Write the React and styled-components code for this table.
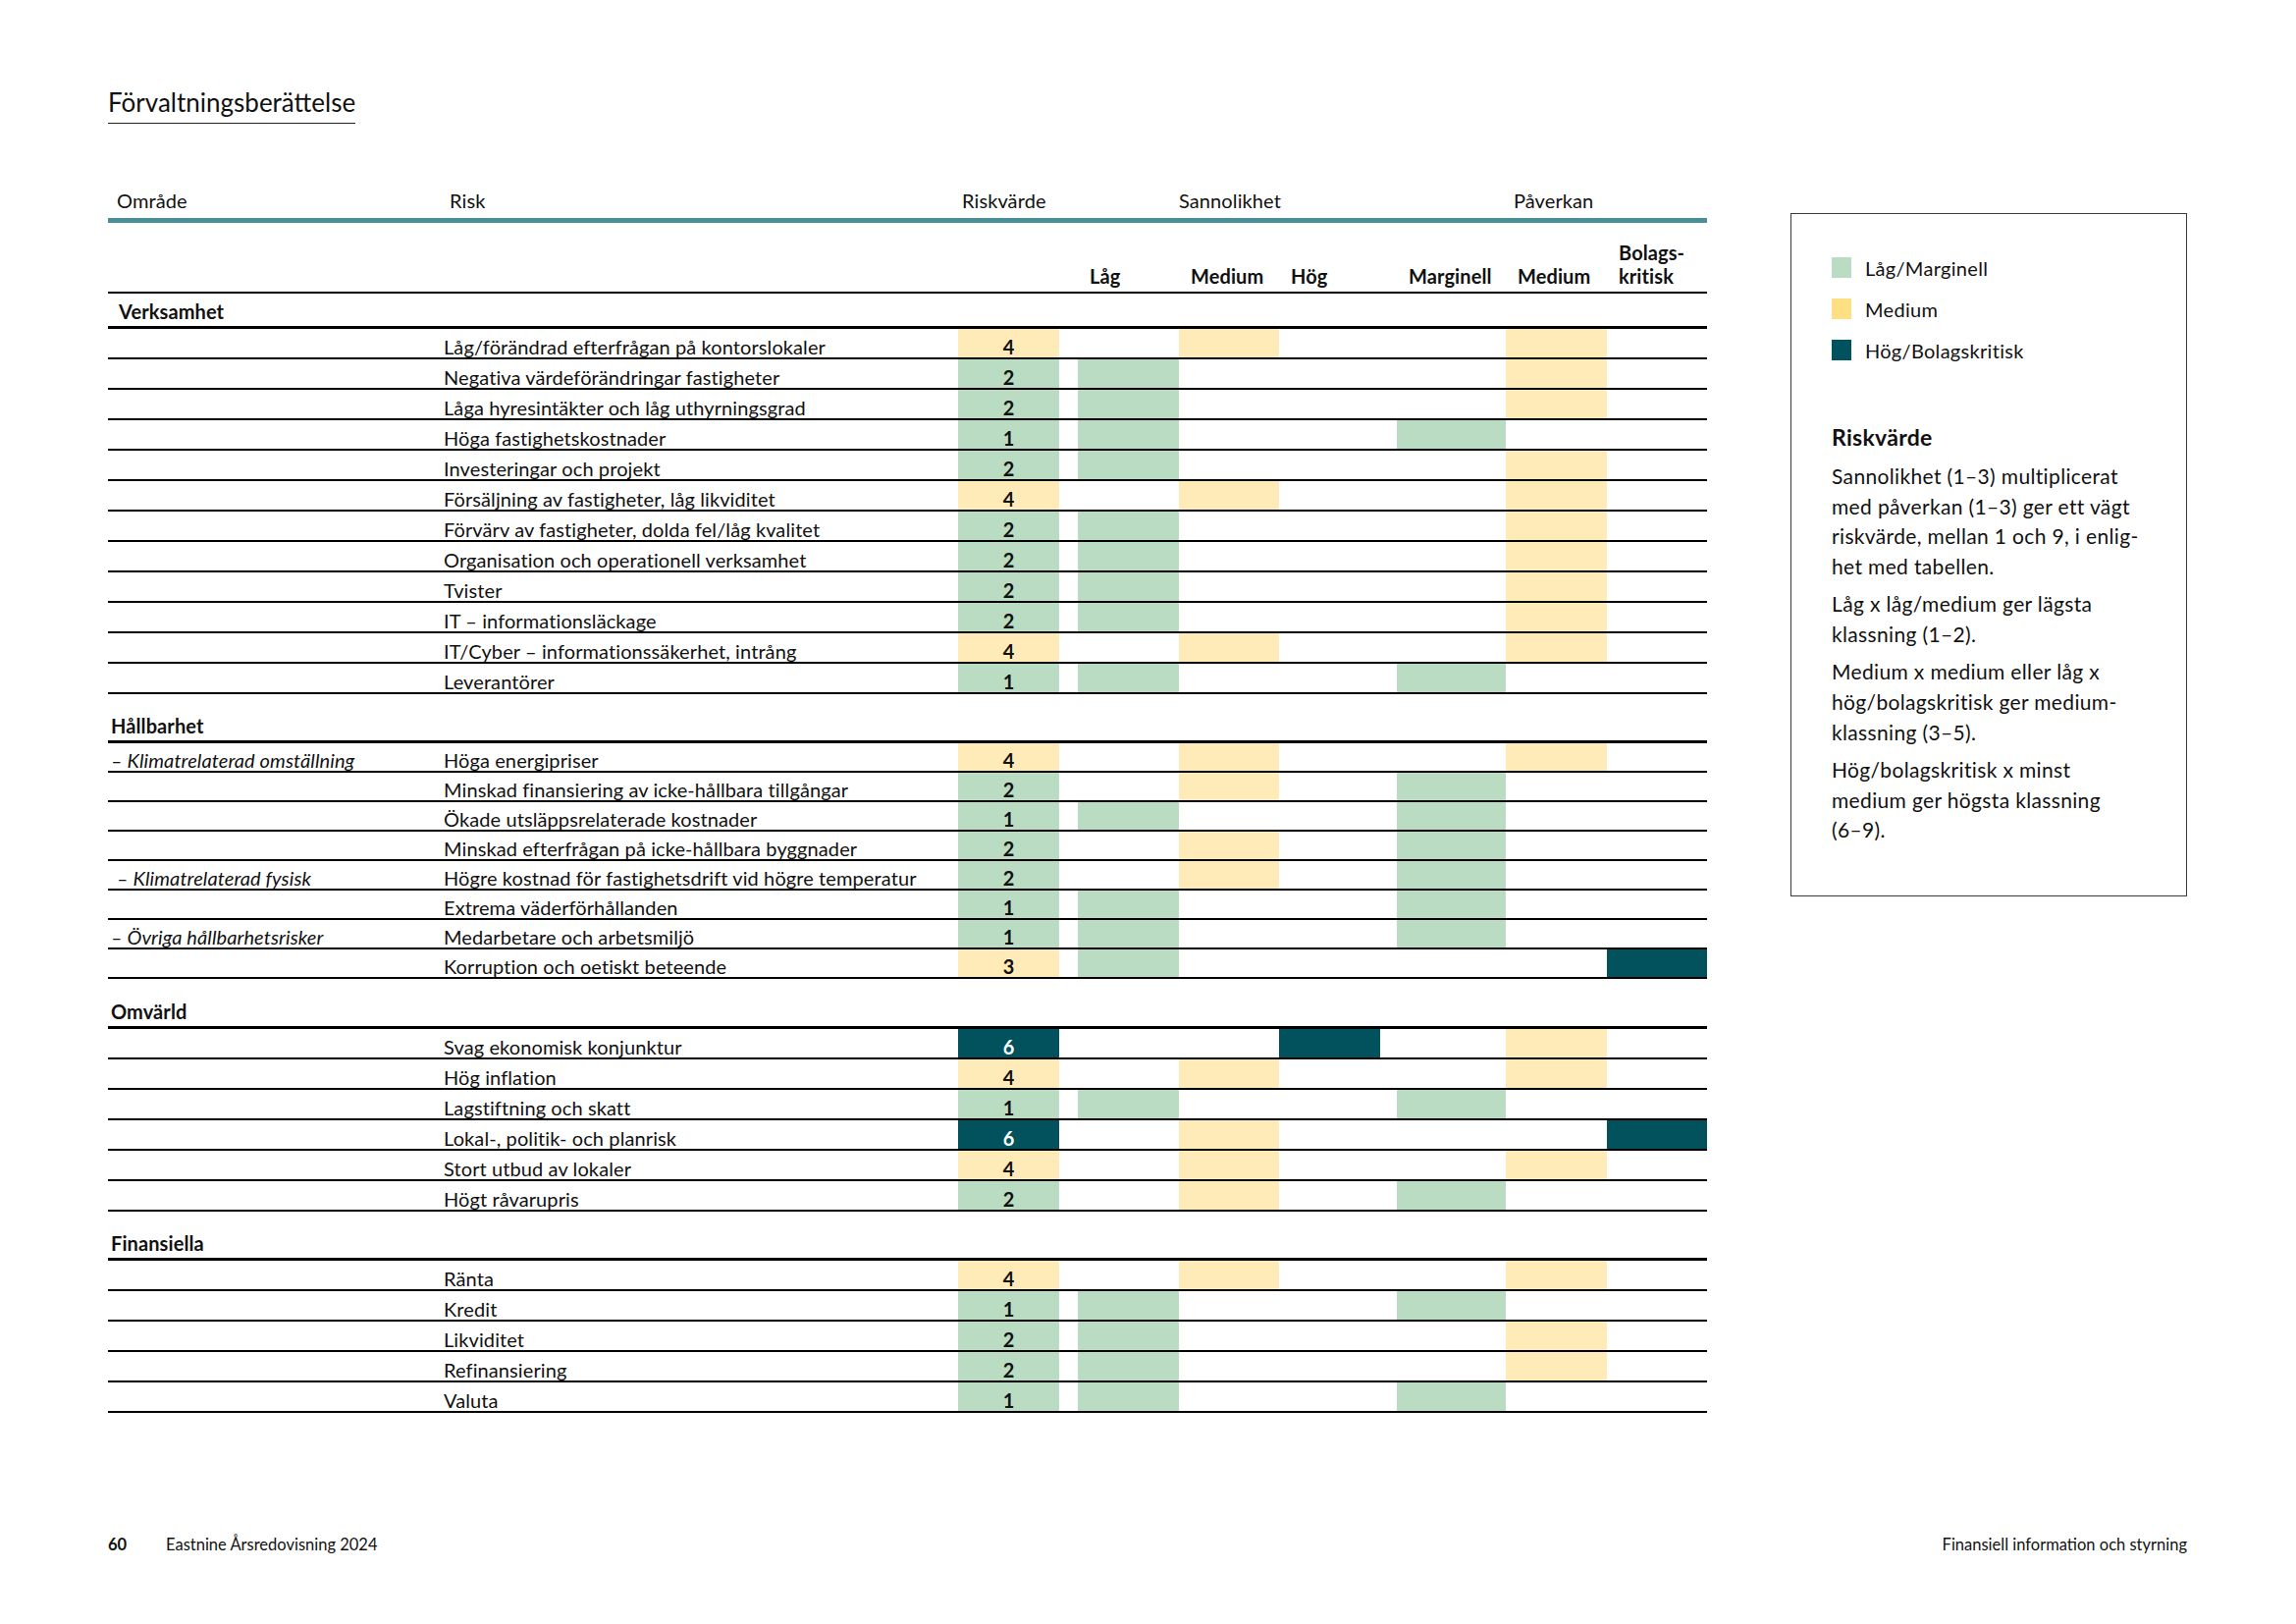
import React from 'react';
import styled, { createGlobalStyle } from 'styled-components';

const GlobalStyle = createGlobalStyle`
  * { box-sizing: border-box; }
  html, body { margin: 0; padding: 0; background: #ffffff; }
  body { font-family: Lato, "Open Sans", sans-serif; color: #111111; }
`;

const COLS = '342px 524px 103px 19px 103px 102px 103px 17px 111px 103px 102px';
const TONES = { g: '#badcc2', y: '#feebb8', d: '#01525d' };
const SANN_TONES = ['g', 'y', 'd'];

const sections = [
  {
    title: 'Verksamhet',
    indent: 11,
    first: true,
    rowHeight: 31,
    rows: [
      ['', 'Låg/förändrad efterfrågan på kontorslokaler', 1, 1],
      ['', 'Negativa värdeförändringar fastigheter', 0, 1],
      ['', 'Låga hyresintäkter och låg uthyrningsgrad', 0, 1],
      ['', 'Höga fastighetskostnader', 0, 0],
      ['', 'Investeringar och projekt', 0, 1],
      ['', 'Försäljning av fastigheter, låg likviditet', 1, 1],
      ['', 'Förvärv av fastigheter, dolda fel/låg kvalitet', 0, 1],
      ['', 'Organisation och operationell verksamhet', 0, 1],
      ['', 'Tvister', 0, 1],
      ['', 'IT – informationsläckage', 0, 1],
      ['', 'IT/Cyber – informationssäkerhet, intrång', 1, 1],
      ['', 'Leverantörer', 0, 0],
    ],
  },
  {
    title: 'Hållbarhet',
    indent: 3,
    rowHeight: 30,
    rows: [
      ['– Klimatrelaterad omställning', 'Höga energipriser', 1, 1],
      ['', 'Minskad finansiering av icke-hållbara tillgångar', 1, 0],
      ['', 'Ökade utsläppsrelaterade kostnader', 0, 0],
      ['', 'Minskad efterfrågan på icke-hållbara byggnader', 1, 0],
      ['– Klimatrelaterad fysisk', 'Högre kostnad för fastighetsdrift vid högre temperatur', 1, 0, 9],
      ['', 'Extrema väderförhållanden', 0, 0],
      ['– Övriga hållbarhetsrisker', 'Medarbetare och arbetsmiljö', 0, 0],
      ['', 'Korruption och oetiskt beteende', 0, 2],
    ],
  },
  {
    title: 'Omvärld',
    indent: 3,
    rowHeight: 31,
    headExtra: 1,
    rows: [
      ['', 'Svag ekonomisk konjunktur', 2, 1],
      ['', 'Hög inflation', 1, 1],
      ['', 'Lagstiftning och skatt', 0, 0],
      ['', 'Lokal-, politik- och planrisk', 1, 2],
      ['', 'Stort utbud av lokaler', 1, 1],
      ['', 'Högt råvarupris', 1, 0],
    ],
  },
  {
    title: 'Finansiella',
    indent: 3,
    rowHeight: 31,
    rows: [
      ['', 'Ränta', 1, 1],
      ['', 'Kredit', 0, 0],
      ['', 'Likviditet', 0, 1],
      ['', 'Refinansiering', 0, 1],
      ['', 'Valuta', 0, 0],
    ],
  },
];

const valueTone = (v) => (v <= 2 ? 'g' : v <= 5 ? 'y' : 'd');

/* ---------- page ---------- */

const Page = styled.div`
  min-height: 1654px;
  display: flex;
  flex-direction: column;
  padding: 90px 111px 71px 110px;
`;

const TitleWrap = styled.div`
  display: flex;
`;

const Title = styled.h1`
  margin: 0;
  font-family: Lato, sans-serif;
  font-weight: 400;
  font-size: 26px;
  line-height: 29px;
  padding-bottom: 6px;
  border-bottom: 1px solid #222222;
  color: #111111;
`;

const Content = styled.div`
  display: flex;
  align-items: flex-start;
  gap: 85px;
  margin-top: 52px;
`;

/* ---------- table ---------- */

const Table = styled.div`
  width: 1629px;
  flex: none;
  font-family: Lato, sans-serif;
  font-size: 20px;
  letter-spacing: 0.1px;
  color: #111111;
`;

const GridRow = styled.div`
  display: grid;
  grid-template-columns: ${COLS};
`;

const HeadTop = styled(GridRow)`
  height: 49px;
  border-bottom: 5px solid #4a8e98;
  padding-bottom: 7px;
  align-items: end;
  line-height: 22px;
`;

const HeadLabel = styled.div`
  grid-column: ${(p) => p.$col};
  padding-left: ${(p) => p.$pad || 0}px;
  white-space: nowrap;
`;

const HeadSub = styled(GridRow)`
  height: 72px;
  border-bottom: 2px solid #000000;
  padding-bottom: 4px;
  align-items: end;
  line-height: 24px;
  font-weight: 700;
`;

const SubLabel = styled.div`
  grid-column: ${(p) => p.$col};
  padding-left: 12px;
  white-space: nowrap;
`;

const SectionHead = styled.div`
  height: ${(p) => (p.$first ? 36 : 50) + (p.$extra || 0)}px;
  border-bottom: 3px solid #000000;
  display: flex;
  align-items: flex-end;
  padding: 0 0 4px ${(p) => p.$indent}px;
  font-weight: 700;
  line-height: 22px;
`;

const Row = styled(GridRow)`
  height: ${(p) => p.$h}px;
  border-bottom: 2px solid #000000;
  line-height: 22px;
`;

const AreaCell = styled.div`
  display: flex;
  align-items: flex-end;
  padding-left: ${(p) => p.$indent}px;
  font-style: italic;
  white-space: nowrap;
`;

const RiskCell = styled.div`
  display: flex;
  align-items: flex-end;
  white-space: nowrap;
`;

const Fill = styled.div`
  display: flex;
  align-items: flex-end;
  justify-content: center;
  background: ${(p) => (p.$tone ? TONES[p.$tone] : 'transparent')};
  color: ${(p) => (p.$tone === 'd' ? '#ffffff' : '#111111')};
  font-weight: 700;
`;

const Gap = styled.div``;

function DataRow({ row, h }) {
  const [area, risk, s, p, areaIndent] = row;
  const v = (s + 1) * (p + 1);
  return (
    <Row $h={h}>
      <AreaCell $indent={areaIndent || 3}>{area}</AreaCell>
      <RiskCell>{risk}</RiskCell>
      <Fill $tone={valueTone(v)}>{v}</Fill>
      <Gap />
      {[0, 1, 2].map((i) => (
        <Fill key={'s' + i} $tone={i === s ? SANN_TONES[i] : null} />
      ))}
      <Gap />
      {[0, 1, 2].map((i) => (
        <Fill key={'p' + i} $tone={i === p ? SANN_TONES[i] : null} />
      ))}
    </Row>
  );
}

/* ---------- sidebar ---------- */

const Aside = styled.aside`
  width: 404px;
  flex: none;
  margin-top: 39px;
  border: 1px solid #3a3a3a;
  padding: 44px 16px 51px 41px;
  font-family: Lato, sans-serif;
  color: #111111;
`;

const Legend = styled.ul`
  list-style: none;
  margin: 0;
  padding: 0;
  display: flex;
  flex-direction: column;
  gap: 21px;
`;

const LegendItem = styled.li`
  display: flex;
  align-items: center;
  gap: 14px;
  height: 21px;
  font-size: 20px;
  letter-spacing: 0.3px;
  line-height: 22px;
`;

const Swatch = styled.span`
  width: 20px;
  height: 21px;
  flex: none;
  background: ${(p) => p.$color};
`;

const AsideHeading = styled.h2`
  margin: 64px 0 0;
  font-size: 23px;
  letter-spacing: 0.3px;
  line-height: 28px;
  font-weight: 700;
`;

const Para = styled.p`
  margin: ${(p) => (p.$first ? 11 : 7.5)}px 0 0;
  font-size: 21px;
  letter-spacing: 0.35px;
  line-height: 30.7px;
  white-space: nowrap;
`;

/* ---------- footer ---------- */

const Footer = styled.footer`
  margin-top: auto;
  display: flex;
  justify-content: space-between;
  align-items: center;
  font-family: Lato, sans-serif;
  font-size: 16.5px;
  line-height: 20px;
  color: #111111;
`;

const FooterLeft = styled.div`
  display: flex;
  align-items: center;
`;

const PageNo = styled.span`
  font-weight: 700;
  width: 59px;
`;

export default function App() {
  return (
    <>
      <GlobalStyle />
      <Page>
        <TitleWrap>
          <Title>Förvaltningsberättelse</Title>
        </TitleWrap>
        <Content>
          <Table>
            <HeadTop>
              <HeadLabel $col="1" $pad={9}>Område</HeadLabel>
              <HeadLabel $col="2" $pad={6}>Risk</HeadLabel>
              <HeadLabel $col="3" $pad={4}>Riskvärde</HeadLabel>
              <HeadLabel $col="6 / span 3">Sannolikhet</HeadLabel>
              <HeadLabel $col="10 / span 2" $pad={8}>Påverkan</HeadLabel>
            </HeadTop>
            <HeadSub>
              <SubLabel $col="5">Låg</SubLabel>
              <SubLabel $col="6">Medium</SubLabel>
              <SubLabel $col="7">Hög</SubLabel>
              <SubLabel $col="9">Marginell</SubLabel>
              <SubLabel $col="10">Medium</SubLabel>
              <SubLabel $col="11">
                Bolags-
                <br />
                kritisk
              </SubLabel>
            </HeadSub>
            {sections.map((sec) => (
              <React.Fragment key={sec.title}>
                <SectionHead $first={sec.first} $indent={sec.indent} $extra={sec.headExtra}>
                  {sec.title}
                </SectionHead>
                {sec.rows.map((r) => (
                  <DataRow key={r[1]} row={r} h={sec.rowHeight} />
                ))}
              </React.Fragment>
            ))}
          </Table>
          <Aside>
            <Legend>
              <LegendItem>
                <Swatch $color="#b9dcc3" />
                Låg/Marginell
              </LegendItem>
              <LegendItem>
                <Swatch $color="#fee083" />
                Medium
              </LegendItem>
              <LegendItem>
                <Swatch $color="#00525e" />
                Hög/Bolagskritisk
              </LegendItem>
            </Legend>
            <AsideHeading>Riskvärde</AsideHeading>
            <Para $first>
              Sannolikhet (1–3) multiplicerat
              <br />
              med påverkan (1–3) ger ett vägt
              <br />
              riskvärde, mellan 1 och 9, i enlig-
              <br />
              het med tabellen.
            </Para>
            <Para>
              Låg x låg/medium ger lägsta
              <br />
              klassning (1–2).
            </Para>
            <Para>
              Medium x medium eller låg x
              <br />
              hög/bolagskritisk ger medium-
              <br />
              klassning (3–5).
            </Para>
            <Para>
              Hög/bolagskritisk x minst
              <br />
              medium ger högsta klassning
              <br />
              (6–9).
            </Para>
          </Aside>
        </Content>
        <Footer>
          <FooterLeft>
            <PageNo>60</PageNo>
            <span>Eastnine Årsredovisning 2024</span>
          </FooterLeft>
          <span>Finansiell information och styrning</span>
        </Footer>
      </Page>
    </>
  );
}
